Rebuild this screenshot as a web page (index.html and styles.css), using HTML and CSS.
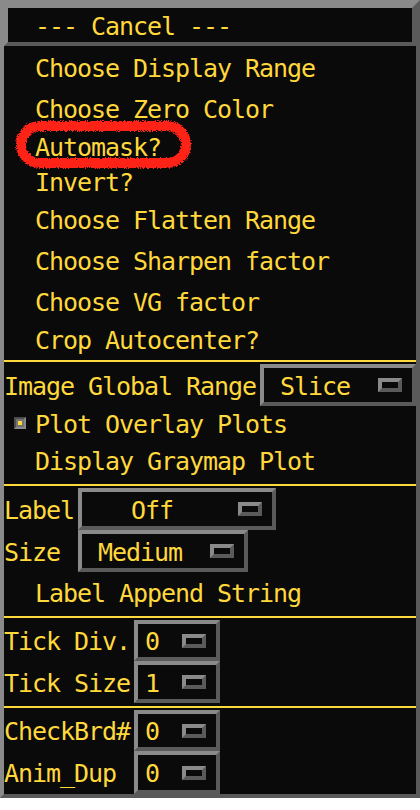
FILE: index.html
```html
<!DOCTYPE html>
<html>
<head>
<meta charset="utf-8">
<link rel="stylesheet" href="styles.css">
</head>
<body>
<div class="menu">
  <div class="cancel"><span>--- Cancel ---</span></div>
  <div class="item push">Choose Display Range</div>
  <div class="item push">Choose Zero Color</div>
  <div class="item toggle">Automask?</div>
  <div class="item toggle">Invert?</div>
  <div class="item push">Choose Flatten Range</div>
  <div class="item push">Choose Sharpen factor</div>
  <div class="item push">Choose VG factor</div>
  <div class="item toggle">Crop Autocenter?</div>
  <div class="sep"></div>
  <div class="field row42">
    <span class="lbl lbl-igr">Image Global Range</span>
    <div class="opt opt-slice"><span class="val">Slice</span><span class="ind"></span></div>
  </div>
  <div class="item toggle check"><span class="chk"><span class="dot"></span></span>Plot Overlay Plots</div>
  <div class="item graymap">Display Graymap Plot</div>
  <div class="sep"></div>
  <div class="field row42">
    <span class="lbl lbl-short">Label</span>
    <div class="opt opt-off"><span class="val val-off">Off</span><span class="ind"></span></div>
  </div>
  <div class="field row42">
    <span class="lbl lbl-short">Size</span>
    <div class="opt opt-medium"><span class="val">Medium</span><span class="ind"></span></div>
  </div>
  <div class="item append">Label Append String</div>
  <div class="sep"></div>
  <div class="field row41">
    <span class="lbl lbl-tick">Tick Div.</span>
    <div class="opt opt-tick"><span class="val val-tick">0</span><span class="ind"></span></div>
  </div>
  <div class="field row42">
    <span class="lbl lbl-tick">Tick Size</span>
    <div class="opt opt-tick"><span class="val val-tick">1</span><span class="ind"></span></div>
  </div>
  <div class="sep sep-tight"></div>
  <div class="field row41">
    <span class="lbl lbl-tick">CheckBrd#</span>
    <div class="opt opt-tick"><span class="val val-tick">0</span><span class="ind"></span></div>
  </div>
  <div class="field row43">
    <span class="lbl lbl-tick">Anim_Dup</span>
    <div class="opt opt-tick"><span class="val val-tick">0</span><span class="ind"></span></div>
  </div>

  <svg class="scribble" width="184" height="60" viewBox="0 0 184 60">
    <defs>
      <filter id="rough" x="-10%" y="-20%" width="120%" height="140%">
        <feTurbulence type="fractalNoise" baseFrequency="0.9" numOctaves="2" seed="5" result="n"/>
        <feDisplacementMap in="SourceGraphic" in2="n" scale="5" xChannelSelector="R" yChannelSelector="G"/>
      </filter>
    </defs>
    <rect x="8" y="8" width="165" height="37" rx="18.5" ry="18.5" fill="none" stroke="#ff2418" stroke-width="10" filter="url(#rough)"/>
  </svg>
</div>
</body>
</html>
```

FILE: styles.css
```css
html, body {
  margin: 0;
  padding: 0;
  background: #ffffff;
}

body {
  font-family: "DejaVu Sans Mono", "Liberation Mono", monospace;
  font-size: 25px;
  letter-spacing: -1.05px;
  color: #ffd83c;
}

.menu {
  position: relative;
  width: 420px;
  height: 798px;
  box-sizing: border-box;
  border: 4px solid;
  border-color: #8a8a8a #5a5a5a #5a5a5a #8a8a8a;
  background: #0a0a0a;
  overflow: hidden;
  display: flex;
  flex-direction: column;
}

.cancel {
  flex: none;
  height: 42px;
  box-sizing: border-box;
  border: 4px solid;
  border-color: #8a8a8a #5a5a5a #5a5a5a #8a8a8a;
  display: flex;
  align-items: center;
  padding-left: 27px;
  padding-top: 2px;
  white-space: pre;
}

.item {
  flex: none;
  display: flex;
  align-items: center;
  box-sizing: border-box;
  padding-left: 31px;
  padding-top: 4px;
  white-space: pre;
}

.push { height: 41px; }
.toggle { height: 35px; }
.graymap { height: 39px; padding-top: 2px; }
.append { height: 40px; padding-top: 3px; }

.check { padding-left: 10px; padding-top: 2px; }

.chk {
  flex: none;
  width: 12px;
  height: 12px;
  box-sizing: border-box;
  border: 2px solid;
  border-color: #4c4c4c #8a8a8a #8a8a8a #4c4c4c;
  background: #747474;
  margin-right: 9px;
  margin-top: -4px;
  display: flex;
  align-items: center;
  justify-content: center;
}

.dot {
  width: 4px;
  height: 4px;
  background: #ffd83c;
}

.sep {
  flex: none;
  height: 8px;
  box-sizing: border-box;
  padding-top: 4px;
  padding-bottom: 2px;
}

.sep::before {
  content: "";
  display: block;
  height: 2px;
  background: #ffd83c;
}

.sep-tight {
  height: 7px;
  padding-top: 3px;
}

.field {
  flex: none;
  display: flex;
  align-items: flex-start;
  white-space: pre;
}

.row41 { height: 41px; }
.row42 { height: 42px; }
.row43 { height: 43px; }

.lbl {
  flex: none;
  align-self: center;
  padding-top: 2px;
}

.lbl-igr { width: 256px; }
.lbl-short { width: 74px; }
.lbl-tick { width: 130px; }

.opt {
  flex: none;
  height: 100%;
  box-sizing: border-box;
  border: 4px solid;
  border-color: #8a8a8a #5a5a5a #5a5a5a #8a8a8a;
  background: #0a0a0a;
  display: flex;
  align-items: center;
}

.opt-slice { width: 156px; }
.opt-off { width: 198px; }
.opt-medium { width: 170px; }
.opt-tick { width: 86px; }

.val {
  flex: 1;
  padding-left: 16px;
  padding-top: 2px;
}

.val-off { padding-left: 49px; }
.val-tick { padding-left: 7px; }

.ind {
  flex: none;
  width: 24px;
  height: 14px;
  box-sizing: border-box;
  border: 4px solid;
  border-color: #8a8a8a #5a5a5a #5a5a5a #8a8a8a;
  margin-right: 10px;
}

.scribble {
  position: absolute;
  left: 9px;
  top: 114px;
}
```
